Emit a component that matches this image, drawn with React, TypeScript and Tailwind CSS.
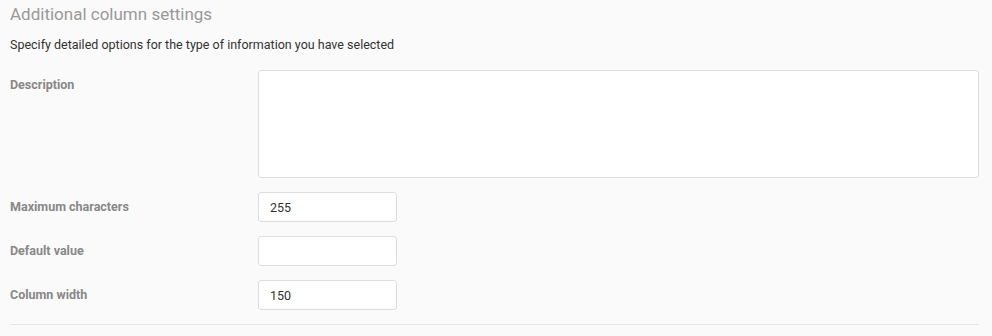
import React from 'react';

const fieldRows = [
  { label: 'Maximum characters', value: '255' },
  { label: 'Default value', value: '' },
  { label: 'Column width', value: '150' },
];

const App: React.FC = () => {
  return (
    <div className="h-[336px] w-full bg-[#fafafa] font-['Roboto',sans-serif] text-[#333]">
      <div className="w-[979px] pl-[10px] pt-[3px]">
        <h2 className="text-[17px] leading-[22px] font-normal text-[#999]">Additional column settings</h2>
        <p className="mt-[12px] text-[12.5px] leading-[15px] text-[#333]">
          Specify detailed options for the type of information you have selected
        </p>

        <div className="mt-[18px] flex flex-col gap-[14px]">
          <div className="flex items-start">
            <label className="w-[248px] pt-[7px] text-[12.5px] leading-[15px] font-bold text-[#888]">Description</label>
            <textarea className="h-[108px] flex-1 resize-none rounded-[3px] border border-[#ddd] bg-white px-[11px] py-[7px] text-[12.5px] outline-none" />
          </div>
          {fieldRows.map(row => (
            <div key={row.label} className="flex items-start">
              <label className="w-[248px] pt-[7px] text-[12.5px] leading-[15px] font-bold text-[#888]">{row.label}</label>
              <input
                type="text"
                defaultValue={row.value}
                className="h-[30px] w-[139px] rounded-[3px] border border-[#ddd] bg-white px-[11px] text-[12.5px] text-[#333] outline-none"
              />
            </div>
          ))}
        </div>

        <div className="mt-[14px] border-t border-[#e6e6e6]" />
      </div>
    </div>
  );
};

export default App;
